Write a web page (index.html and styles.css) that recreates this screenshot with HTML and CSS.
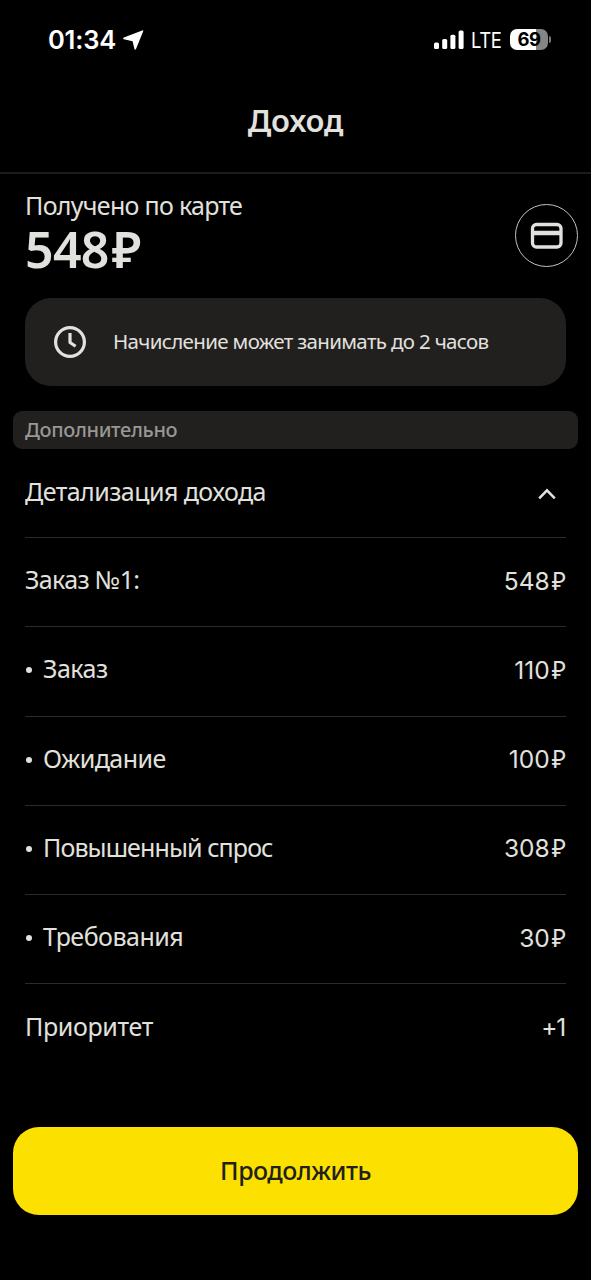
FILE: index.html
```html
<!DOCTYPE html>
<html lang="ru">
<head>
<meta charset="utf-8">
<title>Доход</title>
<link rel="stylesheet" href="styles.css">
</head>
<body>
<div class="status">
  <div class="status-left"><span class="time">01:34</span>
    <svg class="arrow" width="21" height="20" viewBox="0 0 21 20"><path d="M20.200 1.200Q20.500 0 19.200.4L.8 7.600Q-.5 8.500.9 9.200L9.600 11.200 11.400 19Q12.200 20.300 13 19.100z" fill="#fff"/></svg>
  </div>
  <div class="status-right">
    <svg class="signal" width="30" height="20" viewBox="0 0 30 20" fill="#fff"><rect x="0" y="12.500" width="5" height="6.500" rx="1.500"/><rect x="8.200" y="9" width="5" height="10" rx="1.500"/><rect x="16.400" y="4.800" width="5" height="14.200" rx="1.500"/><rect x="24.600" y="0.500" width="5" height="18.500" rx="1.500"/></svg>
    <span class="lte">LTE</span>
    <span class="battery">69</span>
    <span class="battery-tip"></span>
  </div>
</div>
<header class="header"><h1 class="title">Доход</h1></header>
<main class="main">
  <section class="summary">
    <div>
      <div class="label">Получено по карте</div>
      <div class="total">548<span class="total-currency">₽</span></div>
    </div>
    <div class="card-button">
      <svg width="34" height="28" viewBox="0 0 34 28" fill="none" stroke="#e2e1de"><rect x="2.500" y="2.500" width="28.500" height="22.500" rx="4" stroke-width="3.300"/><path d="M2.500 11h28.500" stroke-width="4.500"/></svg>
    </div>
  </section>
  <section class="notice">
    <svg class="clock" width="34" height="34" viewBox="0 0 34 34" fill="none" stroke="#e2e1de" stroke-width="3.200"><circle cx="17" cy="17" r="14.400"/><path d="M17 8v9.500l5.600 3.800" stroke-linejoin="round"/></svg>
    <span class="notice-text">Начисление может занимать до 2 часов</span>
  </section>
  <div class="section-title"><span>Дополнительно</span></div>
  <div class="rows">
    <div class="row"><span class="name details">Детализация дохода</span>
      <svg class="chevron" width="18" height="12" viewBox="0 0 18 12" fill="none" stroke="#e2e1de" stroke-width="2.500"><path d="m1.200 10.300 7.800-8 7.800 8"/></svg></div>
    <div class="row"><span class="name order">Заказ №1:</span><span class="price">548<b>₽</b></span></div>
    <div class="row"><span class="name sub"><i class="dot"></i>Заказ</span><span class="price">110<b>₽</b></span></div>
    <div class="row"><span class="name sub"><i class="dot"></i>Ожидание</span><span class="price">100<b>₽</b></span></div>
    <div class="row"><span class="name sub demand"><i class="dot"></i>Повышенный спрос</span><span class="price">308<b>₽</b></span></div>
    <div class="row"><span class="name sub"><i class="dot"></i>Требования</span><span class="price">30<b>₽</b></span></div>
    <div class="row last"><span class="name priority">Приоритет</span><span class="price bonus">+1</span></div>
  </div>
</main>
<button class="continue">Продолжить</button>
</body>
</html>
```
FILE: styles.css
```css
* { box-sizing: border-box; }
body {
  margin: 0;
  width: 591px;
  height: 1280px;
  overflow: hidden;
  background: #000;
  color: #e2e1de;
  font-family: "Noto Sans", sans-serif;
}
.status {
  height: 80px;
  display: flex;
  justify-content: space-between;
  padding: 0 40px 0 48px;
  color: #fff;
  font-family: Inter, sans-serif;
}
.status-left, .status-right { display: flex; align-items: center; height: 79px; }
.time { font-size: 25.5px; font-weight: 600; width: 75px; white-space: nowrap; letter-spacing: -0.2px; }
.lte { font-size: 22px; margin-left: 7px; width: 32px; letter-spacing: -0.5px; transform: scaleX(0.84); transform-origin: 0 50%; }
.battery {
  width: 38px;
  height: 21px;
  margin-left: 7px;
  border-radius: 7px;
  background: linear-gradient(90deg, #fff 69%, #858585 69%);
  color: #000;
  font-size: 18.5px;
  font-weight: 700;
  line-height: 21px;
  text-align: center;
  letter-spacing: -0.5px;
}
.battery-tip { width: 2px; height: 7px; margin-left: 1px; border-radius: 0 3px 3px 0; background: #777; }
.header {
  height: 94px;
  border-bottom: 2px solid #1c1c1c;
  text-align: center;
}
.title { margin: 0; padding-top: 19px; font-size: 31px; line-height: 42px; font-weight: 600; letter-spacing: -0.2px; }
.main { padding: 0 13px; }
.summary { height: 124px; display: flex; justify-content: space-between; padding: 14px 0 0 12px; }
.label { font-size: 25px; line-height: 34px; letter-spacing: -0.7px; }
.total { font-size: 50px; line-height: 56px; font-weight: 600; margin-top: -1px; letter-spacing: -0.7px; }
.total-currency { margin-left: 3px; }
.card-button {
  width: 63px;
  height: 63px;
  margin-top: 16px;
  border: 1px solid #c4c3c0;
  border-radius: 50%;
  display: flex;
  align-items: center;
  justify-content: center;
}
.notice {
  height: 88px;
  margin: 0 12px 0 12px;
  padding-left: 28px;
  border-radius: 26px;
  background: #21201f;
  display: flex;
  align-items: center;
}
.notice-text { margin-left: 26px; padding-bottom: 3px; font-size: 20.5px; line-height: 28px; letter-spacing: -0.66px; white-space: nowrap; }
.section-title {
  height: 38px;
  margin-top: 25px;
  padding-left: 12px;
  border-radius: 9px;
  background: #21201f;
  color: #989793;
  font-size: 20px;
  font-weight: 500;
  line-height: 37px;
  letter-spacing: -0.35px;
}
.rows { margin: 0 12px 0 12px; }
.row {
  height: 89.200px;
  border-bottom: 1px solid #2b2b2b;
  display: flex;
  justify-content: space-between;
  align-items: center;
  padding-bottom: 4px;
}
.row.last { border: 0; }
.name { font-size: 25px; line-height: 34px; letter-spacing: -0.5px; white-space: nowrap; padding-bottom: 2px; }
.details { letter-spacing: -0.55px; padding-bottom: 1px; }
.order { letter-spacing: -0.65px; }
.demand { letter-spacing: -0.9px; }
.priority { letter-spacing: -0.35px; }
.sub { display: flex; align-items: center; }
.dot { width: 6px; height: 6px; border-radius: 50%; background: #e2e1de; margin: 4px 11px 0 1px; }
.price { font-family: Inter, sans-serif; font-size: 24.5px; white-space: nowrap; }
.price b { font-family: "Noto Sans", sans-serif; font-weight: 400; margin-left: 2px; }
.bonus { letter-spacing: -1.2px; padding-right: 1px; }
.chevron { margin: 5px 10px 0 0; }
.continue {
  display: block;
  width: 565px;
  height: 88px;
  margin: 54px 0 0 13px;
  padding: 0 0 3px;
  border: 0;
  border-radius: 26px;
  background: #fce000;
  color: #21201f;
  font-family: "Noto Sans", sans-serif;
  font-size: 25px;
  font-weight: 500;
  letter-spacing: -0.5px;
}
```
